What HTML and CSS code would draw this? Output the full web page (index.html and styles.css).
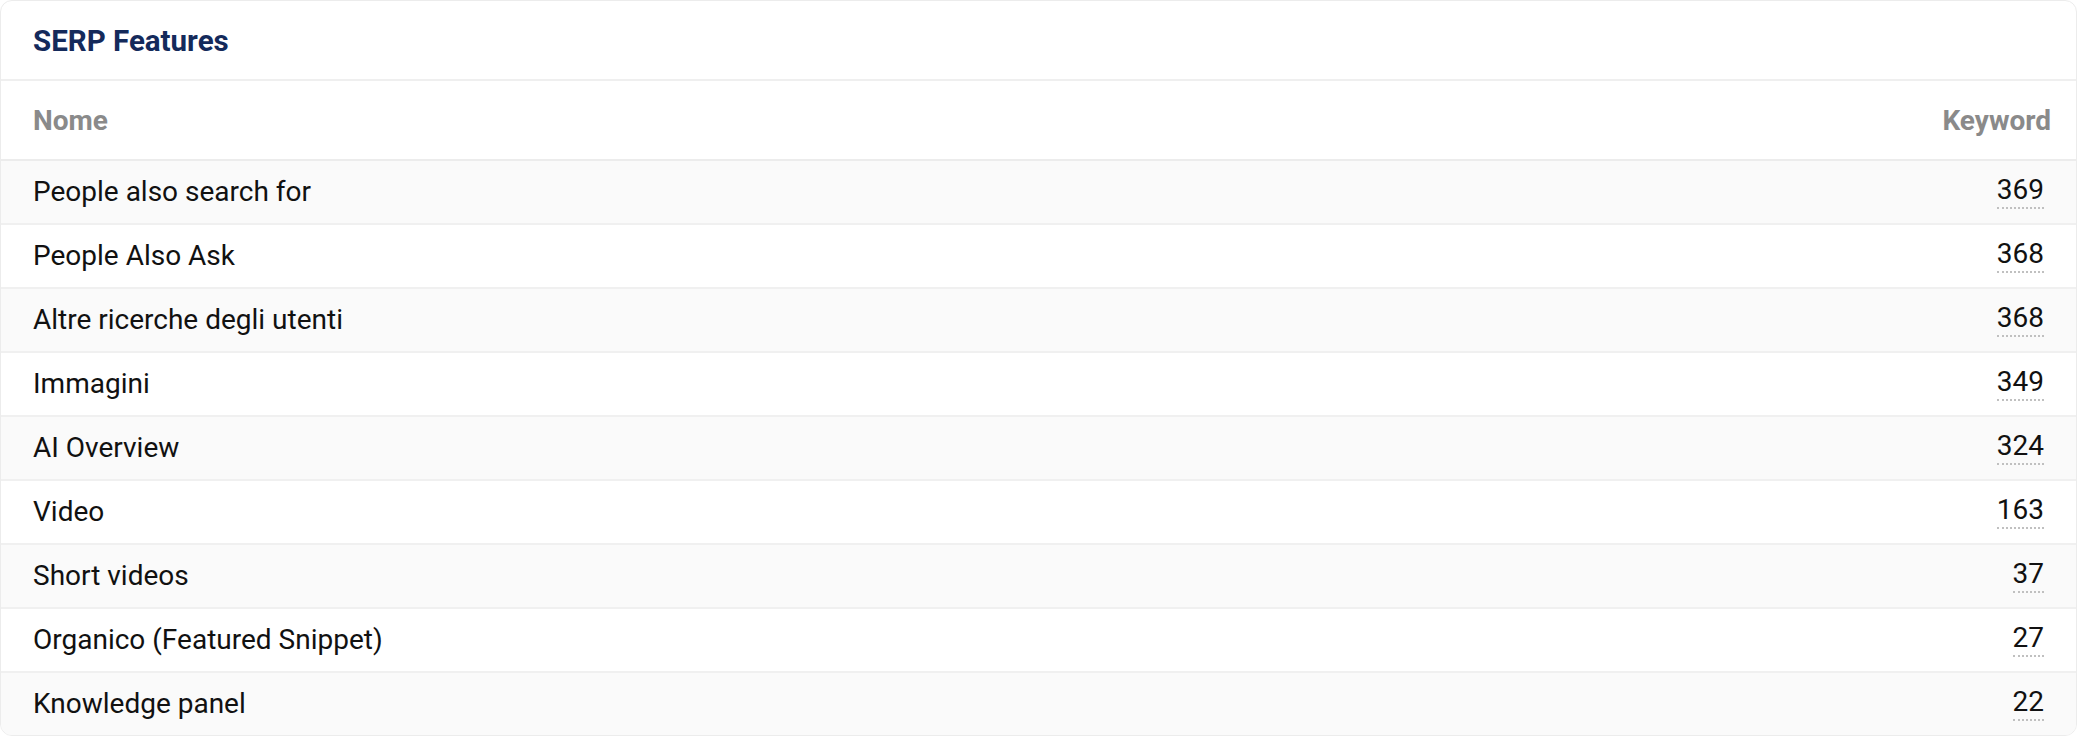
FILE: index.html
```html
<!DOCTYPE html>
<html lang="it">
<head>
<meta charset="utf-8">
<title>SERP Features</title>
<link rel="stylesheet" href="styles.css">
</head>
<body>
<div class="card">
  <div class="card-title">SERP Features</div>
  <div class="thead">
    <div class="col-name">Nome</div>
    <div class="col-kw">Keyword</div>
  </div>
  <div class="tbody">
    <div class="row"><div class="name">People also search for</div><div class="num"><span>369</span></div></div>
    <div class="row"><div class="name">People Also Ask</div><div class="num"><span>368</span></div></div>
    <div class="row"><div class="name">Altre ricerche degli utenti</div><div class="num"><span>368</span></div></div>
    <div class="row"><div class="name">Immagini</div><div class="num"><span>349</span></div></div>
    <div class="row"><div class="name">AI Overview</div><div class="num"><span>324</span></div></div>
    <div class="row"><div class="name">Video</div><div class="num"><span>163</span></div></div>
    <div class="row"><div class="name">Short videos</div><div class="num"><span>37</span></div></div>
    <div class="row"><div class="name">Organico (Featured Snippet)</div><div class="num"><span>27</span></div></div>
    <div class="row"><div class="name">Knowledge panel</div><div class="num"><span>22</span></div></div>
  </div>
</div>
</body>
</html>
```
FILE: styles.css
```css
* { box-sizing: border-box; }
html, body { margin: 0; padding: 0; background: #ffffff; }
body { font-family: Roboto, "Liberation Sans", sans-serif; color: #111; }

.card {
  width: 2077px;
  height: 736px;
  border: 1px solid #ececec;
  border-radius: 12px;
  background: #fff;
  overflow: hidden;
}

.card-title {
  height: 80px;
  display: flex;
  align-items: center;
  padding-left: 32px;
  padding-top: 1px;
  font-size: 29.5px;
  font-weight: 700;
  color: #142a5b;
  border-bottom: 2px solid #efefef;
}

.thead {
  height: 80px;
  display: flex;
  align-items: center;
  justify-content: space-between;
  padding: 1px 25px 0 32px;
  font-size: 28px;
  font-weight: 700;
  color: #8a8a8a;
  border-bottom: 2px solid #ececec;
}

.row {
  height: 64px;
  display: flex;
  align-items: center;
  justify-content: space-between;
  padding: 0 32px 2px 32px;
  font-size: 28px;
  color: #111;
  border-bottom: 2px solid #f0f0f0;
}
.row:nth-child(odd) { background: #fafafa; }
.row:last-child { border-bottom: none; height: 62px; }

.num span {
  display: inline-block;
  line-height: 1.17;
  border-bottom: 2px dotted #c0c0c0;
}
```
